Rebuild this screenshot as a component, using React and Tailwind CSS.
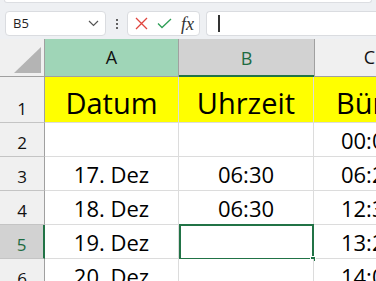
import React from "react";

const rows = [
  { n: "1", a: "Datum", b: "Uhrzeit", c: "Büro", head: true },
  { n: "2", a: "", b: "", c: "00:00" },
  { n: "3", a: "17. Dez", b: "06:30", c: "06:20" },
  { n: "4", a: "18. Dez", b: "06:30", c: "12:30" },
  { n: "5", a: "19. Dez", b: "", c: "13:20", sel: true },
  { n: "6", a: "20. Dez", b: "", c: "14:00" },
];

const font = { fontFamily: "'Open Sans', sans-serif" };

const Toolbar = () => (
  <div className="h-[39px] bg-[#eef0f3] relative">
    <div className="h-[3px] mx-[4px] bg-white border-b border-x border-[#dcdee2] rounded-b-[6px]" />
    <div className="flex items-center pl-[5px] mt-[8px] h-[25px]">
      <div className="w-[101px] h-[25px] bg-white border border-[#dadce0] rounded-[4px] flex items-center justify-between pl-[7px] pr-[6px]">
        <span className="text-[13px] text-[#1f1f1f]" style={font}>B5</span>
        <svg width="11" height="7" viewBox="0 0 11 7">
          <path d="M1 1l4.5 4.5L10 1" fill="none" stroke="#555" strokeWidth="1.2" />
        </svg>
      </div>
      <div className="w-[21px] flex flex-col items-center gap-[2px]">
        <span className="w-[2px] h-[2px] bg-[#333] rounded-full" />
        <span className="w-[2px] h-[2px] bg-[#333] rounded-full" />
        <span className="w-[2px] h-[2px] bg-[#333] rounded-full" />
      </div>
      <div className="w-[73px] h-[25px] bg-white border border-[#dadce0] rounded-[4px] flex items-center pl-[7px] gap-[9px]">
        <svg width="13" height="13" viewBox="0 0 13 13">
          <path d="M1 1l11 11M12 1L1 12" stroke="#e0453f" strokeWidth="1.3" />
        </svg>
        <svg width="15" height="11" viewBox="0 0 15 11">
          <path d="M1 5.5l4 4L14 1" fill="none" stroke="#2e9e56" strokeWidth="1.3" />
        </svg>
        <span className="text-[18px] italic text-[#333] leading-none" style={{ fontFamily: "'Liberation Serif', serif" }}>fx</span>
      </div>
      <div className="ml-[6px] flex-1 h-[25px] bg-white border border-r-0 border-[#dadce0] rounded-l-[4px] flex items-center pl-[11px]">
        <span className="w-[2px] h-[17px] bg-[#333]" />
      </div>
    </div>
  </div>
);

const ColHeader = () => (
  <div className="flex h-[38px] bg-[#f0f0f0]" style={font}>
    <div className="w-[45px] shrink-0 border-r border-b border-[#a0a0a0] relative">
      <div className="absolute right-[3px] bottom-[3px] w-0 h-0 border-l-[27px] border-l-transparent border-b-[26px] border-b-[#b4b4b4]" />
    </div>
    <div className="w-[134px] shrink-0 bg-[#9fd5b7] border-r border-b border-[#a0a0a0] flex items-center justify-center text-[18px] text-[#111]">A</div>
    <div className="w-[135px] shrink-0 bg-[#d2d2d2] border-b-2 border-[#217346] flex items-center justify-center text-[18px] text-[#1e6b42] pt-[2px]">B</div>
    <div className="w-[110px] shrink-0 border-l border-b border-[#a0a0a0] flex items-center justify-center text-[18px] text-[#111]">C</div>
  </div>
);

const Row = ({ r }) => {
  const h = r.head ? "h-[46px]" : "h-[34px]";
  const cellText = r.head ? "text-[29px] pb-[5px]" : "text-[22px] pb-[5px]";
  const bg = r.head ? "bg-[#ffff00]" : "bg-white";
  return (
    <div className={`flex ${h}`} style={font}>
      <div
        className={`w-[45px] shrink-0 flex items-end justify-center pb-[5px] text-[17px] leading-none border-b border-[#c4c4c4] ${
          r.sel ? "bg-[#d2d2d2] text-[#1e6b42] border-r-2 border-r-[#217346]" : "bg-[#f0f0f0] text-[#111] border-r border-r-[#a0a0a0]"
        }`}
      >
        {r.n}
      </div>
      <div className={`w-[134px] shrink-0 ${bg} border-r border-b border-[#dcdcdc] flex items-end justify-center leading-none text-black ${cellText}`}>
        {r.a}
      </div>
      <div
        className={`w-[135px] shrink-0 ${bg} flex items-end justify-center leading-none text-black relative ${cellText} ${
          r.sel ? "border-2 border-[#217346] -mt-[1px] h-[36px]" : "border-r border-b border-[#dcdcdc]"
        }`}
      >
        {r.b}
        {r.sel && <div className="absolute -right-[4px] -bottom-[4px] w-[6px] h-[6px] bg-[#217346] border border-white" />}
      </div>
      <div className={`w-[110px] shrink-0 ${bg} border-b border-[#dcdcdc] flex items-end justify-center leading-none text-black ${cellText}`}>
        {r.c}
      </div>
    </div>
  );
};

const App = () => (
  <div className="w-[376px] h-[281px] overflow-hidden bg-white">
    <Toolbar />
    <ColHeader />
    {rows.map((r) => (
      <Row key={r.n} r={r} />
    ))}
  </div>
);

export default App;
